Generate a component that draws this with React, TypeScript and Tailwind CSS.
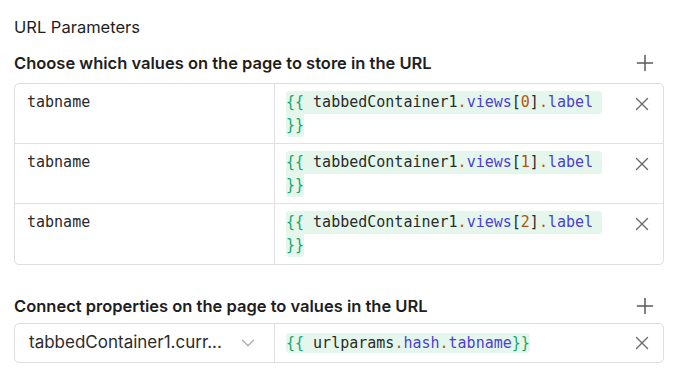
import { Plus, X, ChevronDown } from 'lucide-react';

const mono = "font-['DejaVu_Sans_Mono',monospace] text-[15px]";

const Brace = ({ children }: { children: string }) => <span className="text-[#14a86a]">{children}</span>;
const Dot = () => <span className="text-[#b4540f]">.</span>;
const Prop = ({ children }: { children: string }) => <span className="text-[#4c3fd1]">{children}</span>;

const ViewCode = ({ index }: { index: number }) => (
  <div className={`${mono} leading-[23px] text-[#2b2b2b]`}>
    <span className="inline-block bg-[#e5f7ec] rounded-t-[3px] rounded-br-[3px] whitespace-pre">
      <Brace>{'{{'}</Brace> tabbedContainer1<Dot /><Prop>views</Prop>[<span className="text-[#b4540f]">{index}</span>]<Dot /><Prop>label</Prop>{' '}
    </span>
    <br />
    <span className="inline-block bg-[#e5f7ec] rounded-b-[3px]">
      <Brace>{'}}'}</Brace>
    </span>
  </div>
);

const ParamRow = ({ index, last }: { index: number; last?: boolean }) => (
  <div className={`flex h-[60px] ${last ? '' : 'border-b border-[#e2e2e2]'}`}>
    <div className={`w-[260px] shrink-0 border-r border-[#e2e2e2] pl-[12px] pt-[7px] ${mono} leading-[23px] text-[#2b2b2b]`}>
      tabname
    </div>
    <div className="flex-1 flex pl-[11px] pt-[7px] pr-[10px]">
      <div className="flex-1">
        <ViewCode index={index} />
      </div>
      <button className="h-[25px] flex items-center text-[#6b6b6b]">
        <X className="w-[22px] h-[22px]" strokeWidth={1.5} />
      </button>
    </div>
  </div>
);

export default function App() {
  return (
    <div className="w-[690px] h-[376px] bg-white pl-[14px] pr-[26px] font-['Inter',sans-serif] text-[#1e1e1e]">
      <div className="pt-[15px] text-[16.5px] leading-[24px]">URL Parameters</div>

      <div className="mt-[12px] flex items-center justify-between h-[24px]">
        <div className="text-[16.5px] font-semibold">Choose which values on the page to store in the URL</div>
        <Plus className="w-[26px] h-[26px] text-[#5a5a5a] mr-[6px]" strokeWidth={1.4} />
      </div>

      <div className="mt-[8px] border border-[#dedede] rounded-[5px] overflow-hidden">
        <ParamRow index={0} />
        <ParamRow index={1} />
        <ParamRow index={2} last />
      </div>

      <div className="mt-[29px] flex items-center justify-between h-[24px]">
        <div className="text-[16.5px] font-semibold">Connect properties on the page to values in the URL</div>
        <Plus className="w-[26px] h-[26px] text-[#5a5a5a] mr-[6px]" strokeWidth={1.4} />
      </div>

      <div className="mt-[5px] flex h-[40px] border border-[#dedede] rounded-[5px] overflow-hidden">
        <div className="w-[260px] shrink-0 border-r border-[#e2e2e2] flex items-center pl-[14px] pr-[15px]">
          <span className="flex-1 text-[17px] text-[#2b2b2b]">tabbedContainer1.curr...</span>
          <ChevronDown className="w-[22px] h-[22px] text-[#ababab]" strokeWidth={1.3} />
        </div>
        <div className="flex-1 flex items-center pl-[11px] pr-[10px]">
          <div className={`flex-1 ${mono} leading-[20px] text-[#2b2b2b]`}>
            <span className="inline-block bg-[#e5f7ec] rounded-[3px] whitespace-pre">
              <Brace>{'{{'}</Brace> urlparams<Dot /><Prop>hash</Prop><Dot /><Prop>tabname</Prop><Brace>{'}}'}</Brace>
            </span>
          </div>
          <X className="w-[22px] h-[22px] text-[#6b6b6b]" strokeWidth={1.5} />
        </div>
      </div>
    </div>
  );
}
